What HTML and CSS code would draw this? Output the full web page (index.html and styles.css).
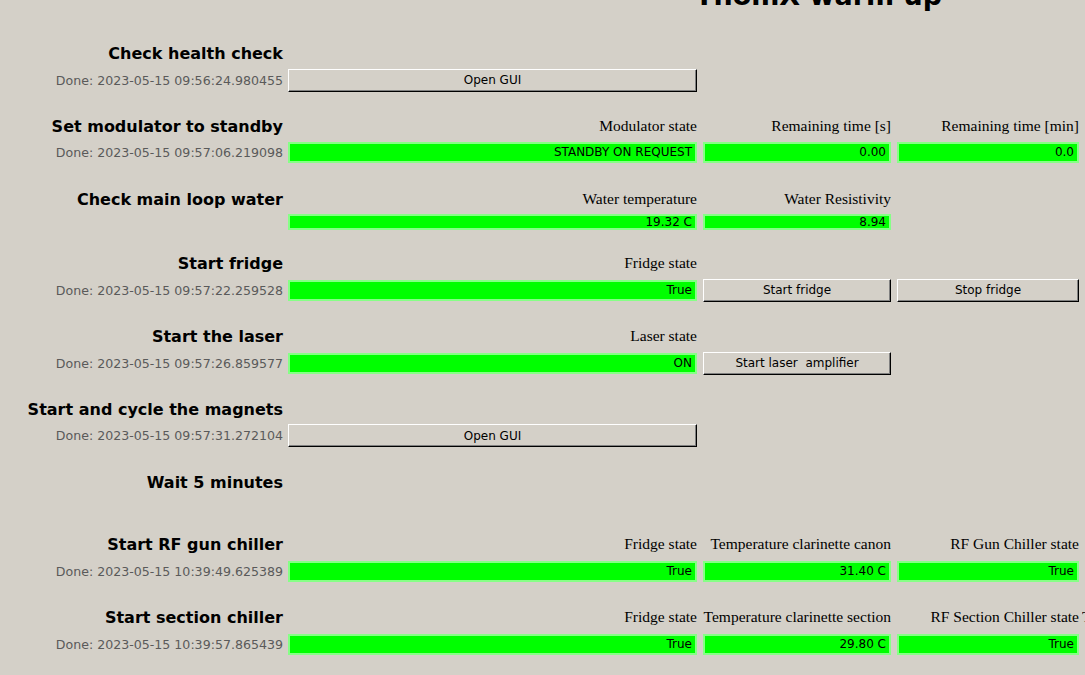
FILE: index.html
```html
<!DOCTYPE html>
<html lang="en">
<head>
<meta charset="utf-8">
<title>ThomX warm up</title>
<link rel="stylesheet" href="styles.css">
</head>
<body>
<h1 class="title">ThomX warm up</h1>
<main class="steps">

  <section class="step">
    <div class="row head">
      <h2 class="name">Check health check</h2>
    </div>
    <div class="row body">
      <div class="status">Done: 2023-05-15 09:56:24.980455</div>
      <button class="btn">Open GUI</button>
    </div>
  </section>

  <section class="step">
    <div class="row head">
      <h2 class="name">Set modulator to standby</h2>
      <div class="cap">Modulator state</div>
      <div class="cap">Remaining time [s]</div>
      <div class="cap">Remaining time [min]</div>
    </div>
    <div class="row body">
      <div class="status">Done: 2023-05-15 09:57:06.219098</div>
      <div class="bar">STANDBY ON REQUEST</div>
      <div class="bar">0.00</div>
      <div class="bar">0.0</div>
    </div>
  </section>

  <section class="step">
    <div class="row head">
      <h2 class="name">Check main loop water</h2>
      <div class="cap">Water temperature</div>
      <div class="cap">Water Resistivity</div>
    </div>
    <div class="row body thin">
      <div class="status"></div>
      <div class="bar">19.32 C</div>
      <div class="bar">8.94</div>
    </div>
  </section>

  <section class="step">
    <div class="row head">
      <h2 class="name">Start fridge</h2>
      <div class="cap">Fridge state</div>
    </div>
    <div class="row body">
      <div class="status">Done: 2023-05-15 09:57:22.259528</div>
      <div class="bar">True</div>
      <button class="btn">Start fridge</button>
      <button class="btn">Stop fridge</button>
    </div>
  </section>

  <section class="step">
    <div class="row head">
      <h2 class="name">Start the laser</h2>
      <div class="cap">Laser state</div>
    </div>
    <div class="row body">
      <div class="status">Done: 2023-05-15 09:57:26.859577</div>
      <div class="bar">ON</div>
      <button class="btn">Start laser&nbsp; amplifier</button>
    </div>
  </section>

  <section class="step">
    <div class="row head">
      <h2 class="name">Start and cycle the magnets</h2>
    </div>
    <div class="row body">
      <div class="status">Done: 2023-05-15 09:57:31.272104</div>
      <button class="btn">Open GUI</button>
    </div>
  </section>

  <section class="step">
    <div class="row head">
      <h2 class="name">Wait 5 minutes</h2>
    </div>
    <div class="row body empty"></div>
  </section>

  <section class="step">
    <div class="row head">
      <h2 class="name">Start RF gun chiller</h2>
      <div class="cap">Fridge state</div>
      <div class="cap">Temperature clarinette canon</div>
      <div class="cap">RF Gun Chiller state</div>
    </div>
    <div class="row body">
      <div class="status">Done: 2023-05-15 10:39:49.625389</div>
      <div class="bar">True</div>
      <div class="bar">31.40 C</div>
      <div class="bar">True</div>
    </div>
  </section>

  <section class="step">
    <div class="row head">
      <h2 class="name">Start section chiller</h2>
      <div class="cap">Fridge state</div>
      <div class="cap">Temperature clarinette section</div>
      <div class="cap">RF Section Chiller state</div>
      <div class="cap cap-left">Temperature section</div>
    </div>
    <div class="row body">
      <div class="status">Done: 2023-05-15 10:39:57.865439</div>
      <div class="bar">True</div>
      <div class="bar">29.80 C</div>
      <div class="bar">True</div>
    </div>
  </section>

</main>
</body>
</html>
```

FILE: styles.css
```css
html, body {
  margin: 0;
  padding: 0;
}

body {
  background: #d4d0c8;
  overflow: hidden;
  width: 1085px;
  height: 675px;
  font-family: "DejaVu Sans", sans-serif;
  color: #000;
}

.title {
  margin: -20px 0 0 0;
  padding-left: 695px;
  font-family: "DejaVu Sans", sans-serif;
  font-weight: bold;
  font-size: 27px;
  line-height: 31px;
  white-space: nowrap;
}

.steps {
  display: flex;
  flex-direction: column;
  gap: 22.75px;
  padding-top: 31px;
}

.step {
  display: flex;
  flex-direction: column;
  gap: 2px;
}

.row {
  display: grid;
  grid-template-columns: 282px 409px 188px 182px 180px;
  column-gap: 6px;
  align-items: center;
  white-space: nowrap;
}

.head {
  height: 24px;
}

.body {
  height: 24px;
}

.body.thin {
  height: 16px;
}

.body.empty {
  height: 14px;
}

.name {
  margin: 0 -1px 0 0;
  font-size: 16px;
  font-weight: bold;
  text-align: right;
  line-height: 20px;
}

.cap {
  font-family: "Liberation Serif", serif;
  font-size: 15.5px;
  text-align: right;
  line-height: 20px;
  padding-bottom: 2px;
  overflow: hidden;
}

.cap-left {
  text-align: left;
  margin-left: -3px;
}

.status {
  margin-right: -1px;
  font-size: 12.6px;
  color: #5a5a5a;
  text-align: right;
  line-height: 18px;
  padding-top: 1px;
}

.bar {
  box-sizing: border-box;
  height: 21px;
  background: #00ff00;
  border: 2px solid #86ff86;
  font-size: 12px;
  line-height: 17px;
  text-align: right;
  padding-right: 3px;
  overflow: hidden;
}

.thin .bar {
  height: 16px;
  line-height: 12px;
}

.btn {
  box-sizing: border-box;
  height: 23px;
  margin: 0;
  padding: 0;
  background: #d4d0c8;
  border-style: solid;
  border-width: 1px;
  border-color: #ffffff #000000 #000000 #ffffff;
  box-shadow: inset -1px -1px 0 #808080;
  font-family: "DejaVu Sans", sans-serif;
  font-size: 12px;
  color: #000;
  text-align: center;
}
```
